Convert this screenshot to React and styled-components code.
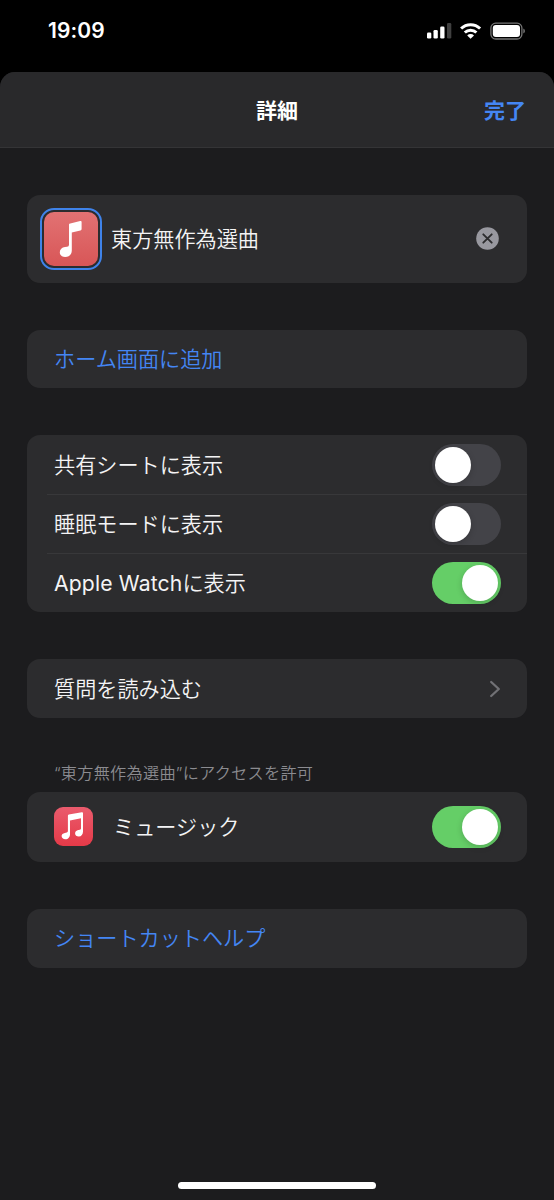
import React, { useState } from "react";
import styled, { createGlobalStyle } from "styled-components";

const GlobalStyle = createGlobalStyle`
  * {
    box-sizing: border-box;
  }
  body {
    margin: 0;
    background: #000;
    font-family: Inter, "Noto Sans CJK JP", sans-serif;
    overflow: hidden;
  }
`;

const Screen = styled.div`
  width: 554px;
  height: 1200px;
  display: flex;
  flex-direction: column;
  background: #000;
`;

// Status bar
const StatusBar = styled.div`
  height: 72px;
  padding: 0 29px 11px 48px;
  display: flex;
  align-items: center;
  justify-content: space-between;
  flex-shrink: 0;
`;

const Clock = styled.span`
  color: #fff;
  font-size: 21px;
  font-weight: 600;
  line-height: 24px;
  letter-spacing: 0.1px;
`;

const StatusIcons = styled.svg`
  display: block;
`;

// Sheet
const Sheet = styled.div`
  flex: 1;
  display: flex;
  flex-direction: column;
  background: #1c1c1e;
  border-radius: 15px 15px 0 0;
  overflow: hidden;
`;

const Header = styled.div`
  height: 76px;
  flex-shrink: 0;
  display: grid;
  grid-template-columns: 1fr auto 1fr;
  align-items: center;
  padding: 2px 28px 0;
  background: #29292b;
  border-bottom: 1px solid #343436;
`;

const Title = styled.h1`
  grid-column: 2;
  margin: 0;
  color: #fff;
  font-size: 21px;
  font-weight: 700;
  line-height: 30px;
`;

const DoneButton = styled.button`
  justify-self: end;
  padding: 0;
  border: none;
  background: none;
  color: #4486f4;
  font-family: inherit;
  font-size: 21px;
  font-weight: 700;
  line-height: 30px;
`;

const Content = styled.div`
  flex: 1;
  padding: 46.5px 27px 0;
  display: flex;
  flex-direction: column;
  gap: 47px;
`;

// Rounded group of rows
const Card = styled.div`
  background: #2c2c2e;
  border-radius: 13px;
  overflow: hidden;
`;

const Row = styled.div`
  height: ${(props) => props.$height || 59}px;
  padding: 0 26px 0 27px;
  display: flex;
  align-items: center;
`;

const Divider = styled.div`
  height: 1px;
  margin: 0 0 -1px 20px;
  background: #38383a;
`;

const Label = styled.span`
  flex: 1;
  padding-top: 2px;
  color: ${(props) => (props.$link ? "#4486f4" : "#f4f4f5")};
  font-size: 21.15px;
  font-weight: 350;
  line-height: 30px;
  white-space: nowrap;
`;

const Latin = styled.span`
  font-weight: 400;
  letter-spacing: 0.15px;
`;

const NameRow = styled(Row)`
  padding: 0 28px 0 13px;
  gap: 9px;
`;

const IconFrame = styled.div`
  width: 62px;
  height: 62px;
  padding: 2px;
  border: 2px solid #3f83ea;
  border-radius: 14px;
`;

const IconTile = styled.div`
  width: 54px;
  height: 54px;
  border-radius: 10px;
  background: linear-gradient(#e27273, #d85657);
`;

const MusicTile = styled.div`
  width: 39px;
  height: 39px;
  margin-right: 20px;
  border-radius: 9px;
  background: linear-gradient(#ea5b6d, #e53a48);
`;

const Track = styled.button`
  width: 69px;
  height: 42px;
  padding: 3px;
  border: none;
  border-radius: 21px;
  display: flex;
  justify-content: ${(props) => (props.$on ? "flex-end" : "flex-start")};
  align-items: center;
  background: ${(props) => (props.$on ? "#65ce67" : "#434348")};
`;

const Knob = styled.span`
  width: 36px;
  height: 36px;
  border-radius: 50%;
  background: #fff;
  box-shadow: 0 2px 6px rgba(0, 0, 0, 0.18);
`;

const Section = styled.div`
  display: flex;
  flex-direction: column;
`;

const Caption = styled.div`
  height: 27px;
  padding: 1px 0 0 27px;
  color: #8b8b90;
  font-size: 16.15px;
  font-weight: 350;
  letter-spacing: 0.28px;
  line-height: 14px;
  white-space: nowrap;
`;

const HomeArea = styled.div`
  height: 34px;
  display: flex;
  justify-content: center;
  padding-top: 16px;
`;

const HomeIndicator = styled.div`
  width: 198px;
  height: 7px;
  border-radius: 4px;
  background: #fff;
`;

const Toggle = ({ on, onClick }) => (
  <Track $on={on} onClick={onClick}>
    <Knob />
  </Track>
);

const App = () => {
  const [shareSheet, setShareSheet] = useState(false);
  const [sleepMode, setSleepMode] = useState(false);
  const [watch, setWatch] = useState(true);
  const [music, setMusic] = useState(true);

  return (
    <Screen>
      <GlobalStyle />
      <StatusBar>
        <Clock>19:09</Clock>
        <StatusIcons width="99" height="18" viewBox="426 21.5 99 18">
          {/* Signal */}
          <rect x="427" y="32" width="4.3" height="6" rx="1.3" fill="#fff" />
          <rect x="433.5" y="29.5" width="4.3" height="8.5" rx="1.3" fill="#fff" />
          <rect x="440.2" y="26" width="4.3" height="12" rx="1.3" fill="#fff" />
          <rect x="447" y="22.5" width="4.3" height="15.5" rx="1.3" fill="#404040" />
          {/* WLAN */}
          <g fill="none" stroke="#fff" strokeWidth="3">
            <path d="M461.1 28 a13.7 13.7 0 0 1 19 0" />
            <path d="M464.8 32 a8.4 8.4 0 0 1 11.6 0" />
          </g>
          <path d="M470.6 38.2 L467.2 34.9 a4.9 4.9 0 0 1 6.8 0 Z" fill="#fff" />
          {/* Battery */}
          <rect x="490.9" y="22.7" width="31" height="15.8" rx="4.8" fill="none" stroke="#757575" strokeWidth="1.3" />
          <rect x="492.8" y="24.5" width="27.2" height="12" rx="3" fill="#fff" />
          <path d="M523.3 28 a2.7 2.7 0 0 1 0 5 Z" fill="#757575" />
        </StatusIcons>
      </StatusBar>

      <Sheet>
        <Header>
          <Title>詳細</Title>
          <DoneButton>完了</DoneButton>
        </Header>

        <Content>
          <Card>
            <NameRow $height={88}>
              <IconFrame>
                <IconTile>
                  <svg width="54" height="54" viewBox="0 0 54 54" fill="#fff">
                    <path d="M25.3 11.8 L36.2 9 Q37.6 8.7 37.6 10 V17 Q37.6 18.2 36.4 18.5 L27.8 20.5 V38.5 C27.8 42.3 25.2 45 21.2 45 C18 45 15.8 43.1 15.8 40.2 C15.8 37.4 17.9 35.5 21 35.1 L23.1 34.8 Q25 34.5 25 32.7 V12.6 Z" />
                  </svg>
                </IconTile>
              </IconFrame>
              <Label>東方無作為選曲</Label>
              <svg width="23" height="23" viewBox="0 0 23 23">
                <circle cx="11.5" cy="11.5" r="11.3" fill="#98989f" />
                <path d="M7.3 7.3 L15.7 15.7 M15.7 7.3 L7.3 15.7" stroke="#2c2c2e" strokeWidth="1.9" strokeLinecap="round" />
              </svg>
            </NameRow>
          </Card>

          <Card>
            <Row $height={58.5}>
              <Label $link>ホーム画面に追加</Label>
            </Row>
          </Card>

          <Card>
            <Row>
              <Label>共有シートに表示</Label>
              <Toggle on={shareSheet} onClick={() => setShareSheet(!shareSheet)} />
            </Row>
            <Divider />
            <Row>
              <Label>睡眠モードに表示</Label>
              <Toggle on={sleepMode} onClick={() => setSleepMode(!sleepMode)} />
            </Row>
            <Divider />
            <Row>
              <Label>
                <Latin>Apple Watch</Latin>に表示
              </Label>
              <Toggle on={watch} onClick={() => setWatch(!watch)} />
            </Row>
          </Card>

          <Card>
            <Row>
              <Label>質問を読み込む</Label>
              <svg width="12" height="18" viewBox="0 0 12 18" fill="none">
                <path d="M2.2 2 L9.8 9 L2.2 16" stroke="#717175" strokeWidth="2.3" strokeLinecap="round" strokeLinejoin="round" />
              </svg>
            </Row>
          </Card>

          <Section>
            <Caption>“東方無作為選曲”にアクセスを許可</Caption>
            <Card>
              <Row $height={69.5}>
                <MusicTile>
                  <svg width="39" height="39" viewBox="0 0 39 39" fill="#fff">
                    <path d="M13.9 8.7 Q13.9 7.8 14.8 7.6 L27.8 5.3 Q29 5.1 29 6.2 V24.4 C29 27.3 27.3 29.4 24.8 29.4 C22.6 29.4 21.1 28.2 21.1 26.4 C21.1 24.7 22.4 23.5 24.3 23.1 L26 22.8 Q27 22.6 27 21.6 V11.3 L16 13.4 V27.2 C16 30.1 14.2 32.2 11.4 32.2 C9.1 32.2 7.6 31 7.6 29.1 C7.6 27.4 8.9 26.3 10.9 25.9 L12.7 25.5 Q13.9 25.2 13.9 24.1 Z" />
                  </svg>
                </MusicTile>
                <Label>ミュージック</Label>
                <Toggle on={music} onClick={() => setMusic(!music)} />
              </Row>
            </Card>
          </Section>

          <Card>
            <Row>
              <Label $link>ショートカットヘルプ</Label>
            </Row>
          </Card>
        </Content>

        <HomeArea>
          <HomeIndicator />
        </HomeArea>
      </Sheet>
    </Screen>
  );
};

export default App;
